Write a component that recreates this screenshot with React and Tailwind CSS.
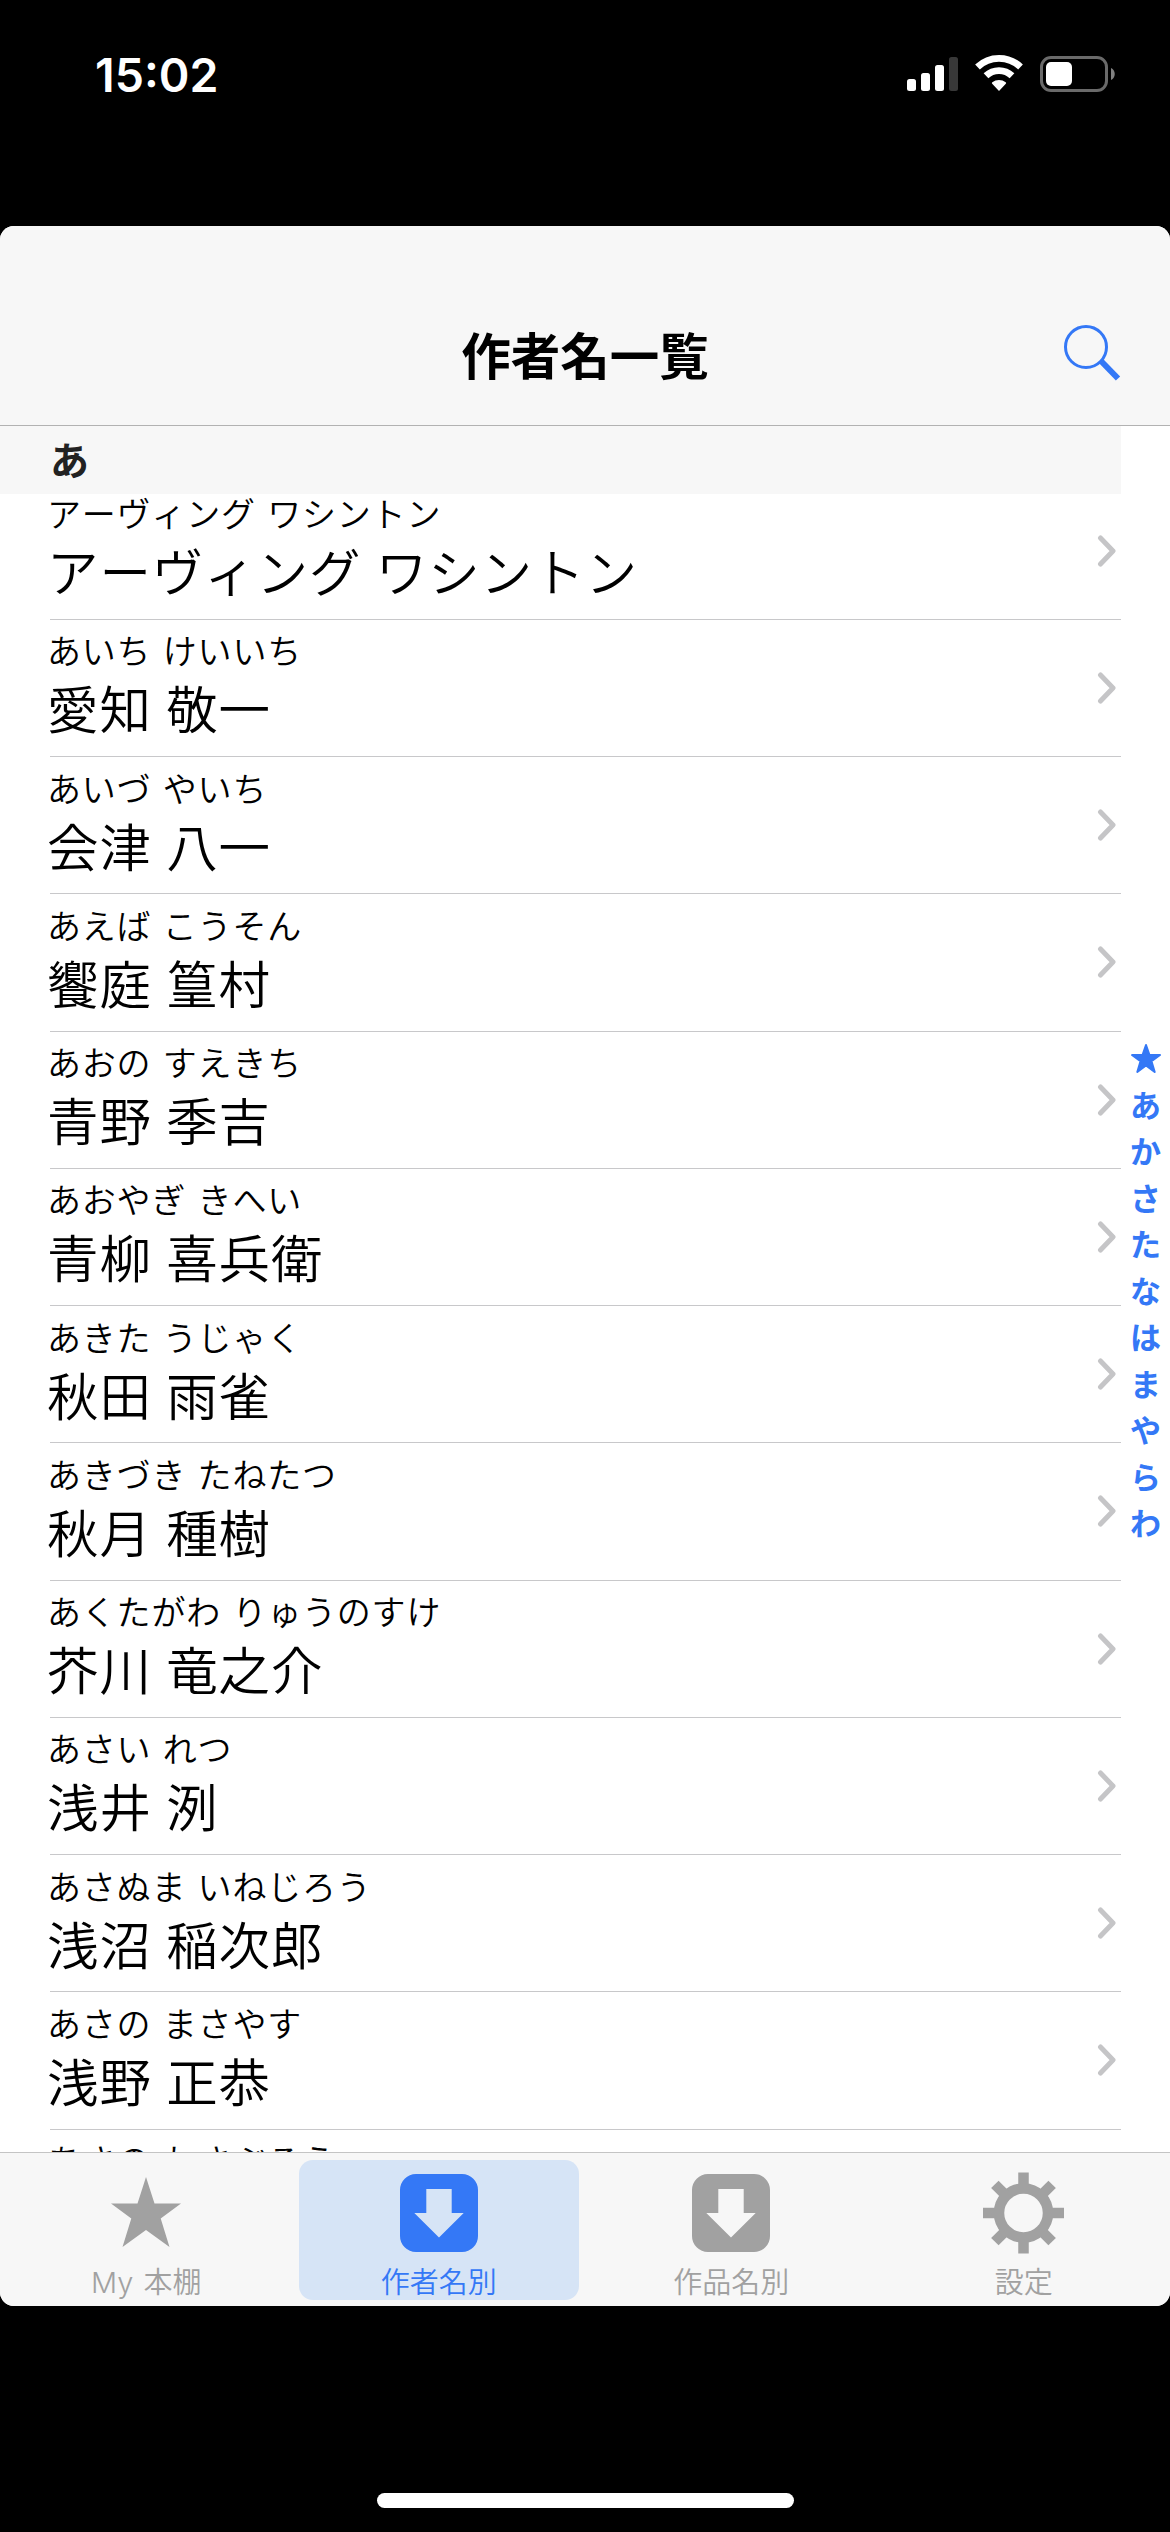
import clsx from 'clsx'

const authors = [
  { kana: 'アーヴィング ワシントン', name: 'アーヴィング ワシントン' },
  { kana: 'あいち けいいち', name: '愛知 敬一' },
  { kana: 'あいづ やいち', name: '会津 八一' },
  { kana: 'あえば こうそん', name: '饗庭 篁村' },
  { kana: 'あおの すえきち', name: '青野 季吉' },
  { kana: 'あおやぎ きへい', name: '青柳 喜兵衛' },
  { kana: 'あきた うじゃく', name: '秋田 雨雀' },
  { kana: 'あきづき たねたつ', name: '秋月 種樹' },
  { kana: 'あくたがわ りゅうのすけ', name: '芥川 竜之介' },
  { kana: 'あさい れつ', name: '浅井 洌' },
  { kana: 'あさぬま いねじろう', name: '浅沼 稲次郎' },
  { kana: 'あさの まさやす', name: '浅野 正恭' },
  { kana: 'あさの わさぶろう', name: '浅野 和三郎' },
]

const indexKeys = ['あ', 'か', 'さ', 'た', 'な', 'は', 'ま', 'や', 'ら', 'わ']

const tabs = [
  { id: 'shelf', label: 'My 本棚', Icon: StarIcon },
  { id: 'author', label: '作者名別', Icon: DownloadIcon },
  { id: 'title', label: '作品名別', Icon: DownloadIcon },
  { id: 'settings', label: '設定', Icon: GearIcon },
]

function StarIcon() {
  return (
    <svg className="size-[82px] shrink-0" viewBox="0 0 82 82" fill="currentColor">
      <path d="M41 5l8.500 26.500H76L55.700 46.500 64.500 75 41 58 17.500 75l8.800-28.500L6 31.500h26.500z" />
    </svg>
  )
}

function DownloadIcon() {
  return (
    <svg className="size-[82px] shrink-0" viewBox="0 0 82 82" fill="currentColor">
      <path fillRule="evenodd" d="M18 2h46a16 16 0 0 1 16 16v46a16 16 0 0 1-16 16H18A16 16 0 0 1 2 64V18A16 16 0 0 1 18 2zM28.300 17v24H16.300L41 65.500 65.700 41H53.700V17z" />
    </svg>
  )
}

function GearIcon() {
  return (
    <svg className="size-[82px] shrink-0" viewBox="0 0 82 82" fill="none" stroke="currentColor" strokeWidth="10.500">
      <circle cx="40.500" cy="41" r="24.500" />
      {[0, 45, 90, 135, 180, 225, 270, 315].map((angle) => (
        <path key={angle} d="M40.500 14V.5" transform={`rotate(${angle} 40.500 41)`} />
      ))}
    </svg>
  )
}

function StatusBar() {
  return (
    <div className="flex h-[226px] items-start justify-between pt-[54px] pr-[54px] pl-[95px] text-white">
      <span className="font-[Inter] text-[46.500px] leading-[42px] font-semibold">15:02</span>
      <svg className="h-[40px] w-[209px]" viewBox="0 0 209 40">
        <g fill="currentColor">
          <rect x="0" y="25" width="9" height="12" rx="2.500" />
          <rect x="14" y="19" width="9" height="18" rx="2.500" />
          <rect x="28" y="11" width="9" height="26" rx="2.500" />
          <rect x="42" y="3" width="9" height="34" rx="2.500" opacity=".22" />
          <path d="M92 37l-6.800-7.200a1 1 0 0 1 .1-1.500 10.500 10.500 0 0 1 13.400 0 1 1 0 0 1 .1 1.500z" />
        </g>
        <g fill="none" stroke="currentColor" strokeWidth="6.800">
          <path d="M70.500 13a31 31 0 0 1 43 0" />
          <path d="M79 21.800a18.800 18.800 0 0 1 26 0" />
        </g>
        <rect x="134.500" y="3.500" width="65" height="33" rx="9.500" fill="none" stroke="#6a6a6a" strokeWidth="3" />
        <rect x="139" y="8" width="26" height="24" rx="5" fill="currentColor" />
        <path d="M204 14c5 2 5 10 0 12z" fill="#808080" />
      </svg>
    </div>
  )
}

function AuthorRow({ kana, name }) {
  return (
    <li className="ml-[50px] flex h-[137.250px] shrink-0 items-center justify-between border-b border-[#c8c8ca] pr-[4px]">
      <div className="-ml-[3px] whitespace-nowrap text-black">
        <p className="text-[34px] leading-[40px] tracking-[0.800px] [word-spacing:3px]">{kana}</p>
        <p className="mt-[7px] mb-[8px] text-[51.500px] leading-[60px] tracking-[0.900px] [word-spacing:2px]">{name}</p>
      </div>
      <svg className="h-[34px] w-[20px]" viewBox="0 0 20 34" fill="none" stroke="#c5c5c7" strokeWidth="5" strokeLinecap="round" strokeLinejoin="round">
        <path d="M3.500 4L16 17 3.500 30" />
      </svg>
    </li>
  )
}

export default function App() {
  const active = 'author'

  return (
    <div className="flex h-[2532px] w-[1170px] flex-col overflow-hidden bg-black font-['Noto_Sans_CJK_JP',sans-serif] font-[350] [font-kerning:none]">
      <StatusBar />
      <div className="flex h-[2080px] flex-col overflow-hidden rounded-[14px] bg-white">
        <header className="grid h-[200px] shrink-0 grid-cols-[1fr_auto_1fr] items-end border-b border-[#b2b2b2] bg-[#f7f7f7]">
          <h1 className="col-start-2 mb-[41px] text-[49.500px] leading-[60px] font-bold text-black">作者名一覧</h1>
          <svg className="mr-[48px] mb-[42px] size-[60px] justify-self-end" viewBox="0 0 60 60" fill="none" stroke="#3478f6">
            <circle cx="24" cy="24" r="20.500" strokeWidth="3" />
            <path d="M39 38l17 17.500" strokeWidth="6" />
          </svg>
        </header>

        <main className="flex min-h-0 flex-1 overflow-hidden">
          <section className="flex w-[1121px] flex-col">
            <h2 className="z-10 h-[68px] shrink-0 bg-[#f7f7f7] pl-[50px] text-[39px] leading-[64px] font-bold text-[#222]">あ</h2>
            <ul className="-mt-[11.500px] flex flex-col">
              {authors.map((author) => <AuthorRow key={author.kana} {...author} />)}
            </ul>
          </section>
          <nav className="flex flex-1 flex-col items-center pt-[610px] text-[31px] font-bold text-[#3478f6]">
            <svg className="h-[46.500px] w-[32px]" viewBox="0 0 32 46.500" fill="currentColor" stroke="currentColor" strokeWidth="2" strokeLinejoin="round">
              <path d="M16 9l3.500 10H30l-8.500 6.200L24.700 36 16 29.500 7.300 36l3.200-10.800L2 19h10.500z" />
            </svg>
            {indexKeys.map((key) => <span key={key} className="h-[46.500px] leading-[42px]">{key}</span>)}
          </nav>
        </main>

        <footer className="flex h-[154px] shrink-0 border-t border-[#c4c4c4] bg-[#f7f7f7]">
          {tabs.map(({ id, label, Icon }) => (
            <div key={id} className="flex flex-1 justify-center pt-[7px]">
              <button
                type="button"
                className={clsx(
                  'flex h-[140px] w-[280px] flex-col items-center rounded-[14px] pt-[12px] whitespace-nowrap',
                  id === active ? 'bg-[#d6e4f6] text-[#3478f6]' : 'text-[#a1a1a1]',
                )}
              >
                <Icon />
                <span className="mt-[12px] font-[Inter,'Noto_Sans_CJK_JP',sans-serif] text-[29px] leading-[34px] [word-spacing:2px]">{label}</span>
              </button>
            </div>
          ))}
        </footer>
      </div>
      <div className="mt-[187px] h-[15px] w-[417px] self-center rounded-full bg-white" />
    </div>
  )
}
